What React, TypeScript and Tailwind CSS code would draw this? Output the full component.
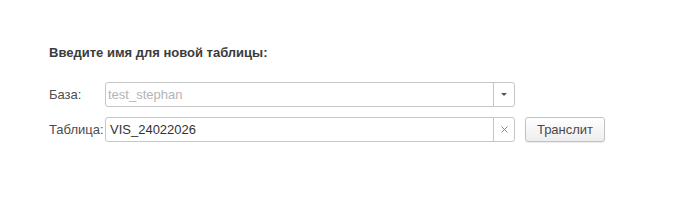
import React from "react";

export default function App() {
  return (
    <div
      className="w-[679px] h-[214px] bg-white pl-[49px] pt-[45px]"
      style={{ fontFamily: '"Liberation Sans", Arial, sans-serif' }}
    >
      <div className="text-[13px] leading-[16px] font-bold text-[#3b3b3b]">
        Введите имя для новой таблицы:
      </div>
      <div className="mt-[21px] flex flex-col gap-[10px]">
        <div className="flex items-center">
          <div className="w-[56px] text-[13px] text-[#4d4d4d]">База:</div>
          <div className="flex h-[25px] w-[410px] rounded-[3px] border border-[#c6c6c6] bg-white">
            <div className="flex flex-1 items-center pl-[2px] text-[13px] text-[#b4b4b4]">
              test_stephan
            </div>
            <div className="flex w-[21px] items-center justify-center border-l border-[#c6c6c6]">
              <svg width="6" height="3" viewBox="0 0 6 3">
                <path d="M0 0 L6 0 L3 3 Z" fill="#555" />
              </svg>
            </div>
          </div>
        </div>
        <div className="flex items-center">
          <div className="w-[56px] text-[13px] text-[#4d4d4d]">Таблица:</div>
          <div className="flex h-[25px] w-[410px] rounded-[3px] border border-[#c6c6c6] bg-white">
            <div className="flex flex-1 items-center pl-[4px] text-[13px] text-[#333]">
              VIS_24022026
            </div>
            <div className="flex w-[21px] items-center justify-center border-l border-[#c6c6c6]">
              <svg width="7" height="7" viewBox="0 0 7 7">
                <path d="M0.5 0.5 L6.5 6.5 M6.5 0.5 L0.5 6.5" stroke="#888" strokeWidth="1" />
              </svg>
            </div>
          </div>
          <button className="ml-[10px] flex h-[25px] w-[80px] items-center justify-center rounded-[3px] border border-[#c2c2c2] bg-gradient-to-b from-white to-[#ededed] text-[13px] text-[#4a4a4a] shadow-[0_1px_1px_rgba(0,0,0,0.08)]">
            Транслит
          </button>
        </div>
      </div>
    </div>
  );
}
